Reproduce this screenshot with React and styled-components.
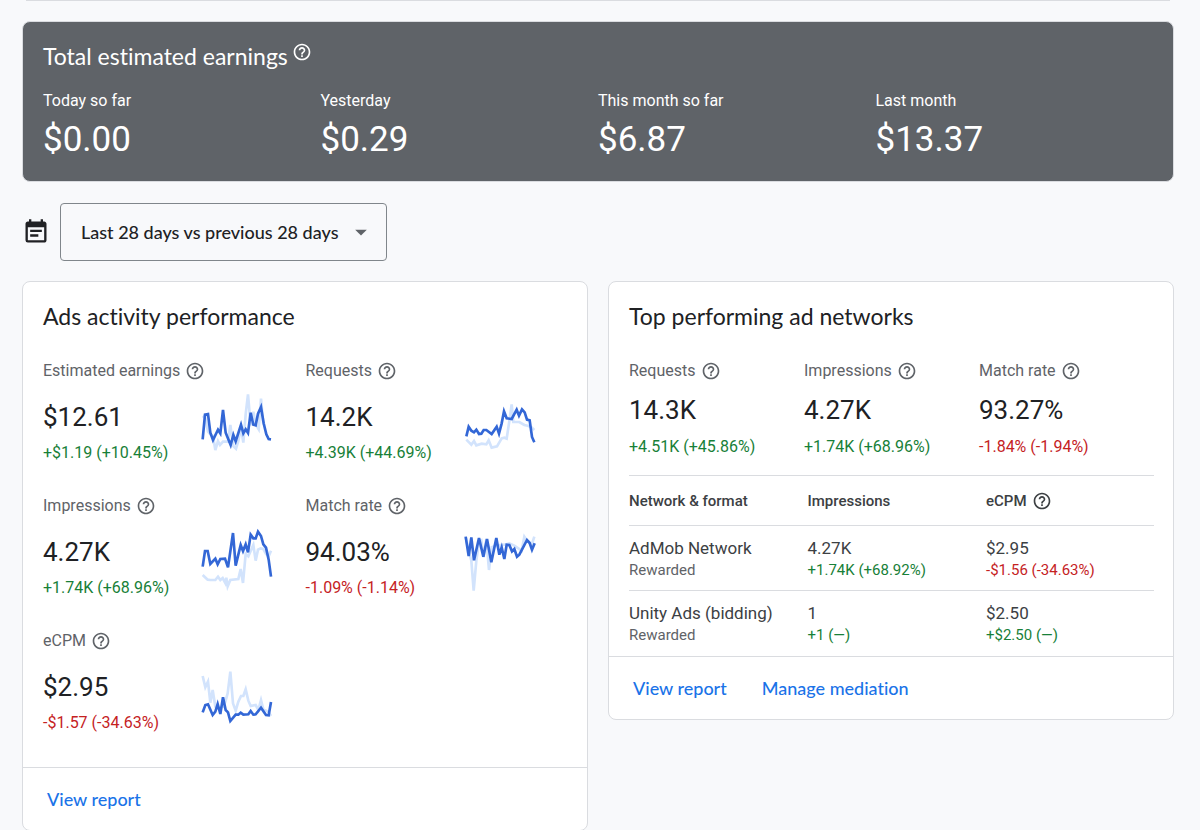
import React, { useState } from 'react'
import styled, { createGlobalStyle } from 'styled-components'
import { MdArrowDropDown, MdEventNote, MdHelpOutline } from 'react-icons/md'


const display = `Lato, 'Open Sans', sans-serif`
const text = `Roboto, 'Liberation Sans', sans-serif`

const deltaColors = {
    up: '#188038',
    down: '#c5221f'
}

const GlobalStyle = createGlobalStyle`
    * {
        box-sizing: border-box;
    }

    body {
        margin: 0;
        background: #f8f9fb;
        color: #202124;
        font-family: ${text};
        font-size: 16px;
        font-variant-ligatures: none;
        line-height: 24px;
    }

    h2, p, dl, dt, dd {
        margin: 0;
    }
`

const Page = styled.main`
    padding: 0 26px 0 22px;
`

const PreviousCard = styled.div`
    height: 1px;
    margin: 0 4px 20px;
    background: #dadce0;
`

const Banner = styled.section`
    padding: 20px 20px 21px;
    border: 1px solid #dadce0;
    border-radius: 8px;
    background: #5f6368;
    color: #fff;
`

const Title = styled.h2`
    display: flex;
    align-items: flex-start;
    gap: 4px;
    font-family: ${display};
    font-size: 23px;
    font-weight: 400;
    line-height: 28px;
`

const EarningsGrid = styled.dl`
    display: grid;
    grid-template-columns: repeat(4, 1fr);
    margin-top: 19px;
`

const EarningsValue = styled.dd`
    padding-top: 7px;
    font-size: 35px;
    line-height: 40px;
`

const HelpButton = styled.button`
    display: inline-flex;
    padding: 0;
    border: 0;
    background: none;
    color: inherit;
    font-size: 20px;
    cursor: pointer;
`

const DateBar = styled.div`
    display: flex;
    align-items: center;
    gap: 10px;
    margin: 21px 0 20px;
`

const CalendarIcon = styled(MdEventNote)`
    font-size: 28px;
`

const SelectBox = styled.div`
    position: relative;
`

const Select = styled.select`
    height: 58px;
    padding: 0 47px 0 20px;
    border: 1px solid #80868b;
    border-radius: 4px;
    appearance: none;
    background: transparent;
    color: #202124;
    font-family: ${display};
    font-size: 18px;
    font-weight: 500;
    cursor: pointer;
`

const SelectArrow = styled(MdArrowDropDown)`
    position: absolute;
    top: 15px;
    right: 12px;
    color: #5f6368;
    font-size: 28px;
    pointer-events: none;
`

const Cards = styled.div`
    display: grid;
    grid-template-columns: 1fr 1fr;
    align-items: start;
    gap: 20px;
`

const Card = styled.section`
    border: 1px solid #dadce0;
    border-radius: 8px;
    background: #fff;
`

const CardBody = styled.div`
    padding: 20px 19px ${props => props.$bottom}px 20px;
`

const CardFooter = styled.footer`
    display: flex;
    gap: 35px;
    padding: 19px 24px;
    border-top: 1px solid #dadce0;
`

const FooterLink = styled.a`
    color: #1a73e8;
    font-family: ${display};
    font-size: 18px;
    font-weight: 500;
    text-decoration: none;
`

const MetricGrid = styled.dl`
    display: grid;
    grid-template-columns: repeat(${props => props.$columns}, 1fr);
    row-gap: 29px;
    margin-top: 29px;
`

const MetricItem = styled.div`
    display: grid;
    grid-template-columns: 158px 1fr;
    align-items: start;
`

const MetricLabel = styled.dt`
    display: flex;
    grid-column: 1 / -1;
    align-items: center;
    gap: 5px;
    color: #5f6368;
`

const MetricValue = styled.dd`
    padding-top: ${props => props.$gap}px;
    font-size: 26px;
    line-height: 32px;
`

const Delta = styled.p`
    color: ${props => deltaColors[props.$trend]};
    font-size: ${props => props.$small ? 15 : 16}px;
    line-height: ${props => props.$small ? 20 : 24}px;
    white-space: nowrap;
`

const MetricDelta = styled(Delta)`
    margin-top: ${props => props.$gap}px;
`

const Spark = styled.svg`
    width: 72px;
    height: 60px;
    margin-top: 8px;
    overflow: visible;
    fill: none;
    stroke-width: 8;
`

const NetworkTable = styled.table`
    width: 100%;
    margin-top: 16px;
    border-collapse: collapse;
    table-layout: fixed;
    text-align: left;
`

const HeadCell = styled.th`
    width: ${props => props.$width};
    height: 50px;
    padding: 0;
    border-top: 1px solid #dadce0;
    color: #3c4043;
    font-size: 15px;
    font-weight: 500;
`

const HeadLabel = styled.span`
    display: flex;
    align-items: center;
    gap: 5px;
`

const Cell = styled.td`
    height: 65px;
    padding: 0;
    border-top: 1px solid #dadce0;
    color: #3c4043;
    font-size: 17px;
    line-height: 24px;
    white-space: nowrap;
`

const Format = styled.p`
    color: #5f6368;
    font-size: 15px;
    line-height: 20px;
`


const earnings = [
    { label: 'Today so far', value: '$0.00' },
    { label: 'Yesterday', value: '$0.29' },
    { label: 'This month so far', value: '$6.87' },
    { label: 'Last month', value: '$13.37' }
]

const activity = [
    {
        label: 'Estimated earnings',
        value: '$12.61',
        delta: '+$1.19 (+10.45%)',
        trend: 'up',
        viewBox: '33 30 216 180',
        previous: '38,105 46,112 54,152 61,160 69,165 76,207 84,180 90,192 99,182 114,182 121,132 130,195 138,203 145,180 153,140 160,185 167,100 174,40 182,133 190,92 197,130 206,145 213,53 220,130',
        current: '38,175 45,101 54,99 61,155 69,177 84,146 91,157 99,87 107,155 122,192 130,162 137,181 153,131 160,157 167,145 174,156 182,95 190,131 197,133 204,98 213,78 221,127 229,160 236,174 243,175'
    },
    {
        label: 'Requests',
        value: '14.2K',
        delta: '+4.39K (+44.69%)',
        trend: 'up',
        viewBox: '39 0 216 180',
        previous: '46,146 61,161 69,150 76,163 92,158 106,160 113,148 122,170 138,166 152,142 160,140 167,143 174,97 182,40 187,93 205,93 220,102 230,104 240,108 250,117',
        current: '46,136 53,107 61,119 69,124 76,116 84,129 91,128 98,117 106,117 122,129 137,107 144,128 152,97 159,61 167,82 182,84 197,56 204,74 213,55 221,64 228,86 236,88 243,138 250,154'
    },
    {
        label: 'Impressions',
        value: '4.27K',
        delta: '+1.74K (+68.96%)',
        trend: 'up',
        viewBox: '33 31 216 180',
        previous: '38,178 53,192 61,193 76,193 84,183 91,193 98,187 106,202 109,186 113,212 121,193 145,190 152,160 159,202 167,115 175,122 190,88 197,135 204,102 212,98 220,100 228,115 236,122 243,105',
        current: '38,153 45,106 53,106 61,145 76,129 83,146 91,130 105,129 114,155 129,52 137,150 152,88 159,106 167,86 174,110 182,57 190,68 197,68 204,48 213,61 220,86 228,96 236,132 243,183'
    },
    {
        label: 'Match rate',
        value: '94.03%',
        delta: '-1.09% (-1.14%)',
        trend: 'down',
        viewBox: '39 16 216 180',
        previous: '44,50 53,90 61,120 68,210 76,120 84,65 91,60 98,110 106,55 114,148 122,80 136,75 160,72 175,68 190,75 212,90 220,48 228,60 243,70 250,48',
        current: '44,48 53,106 61,50 69,119 84,52 97,108 108,55 121,125 136,52 145,102 152,80 160,115 167,72 175,73 183,92 190,85 198,108 205,102 228,58 236,67 243,87 251,68'
    },
    {
        label: 'eCPM',
        value: '$2.95',
        delta: '-$1.57 (-34.63%)',
        trend: 'down',
        viewBox: '33 3 216 180',
        previous: '38,48 46,82 54,65 61,128 68,90 76,140 84,145 99,140 106,125 113,100 121,35 129,130 137,152 145,125 153,108 160,108 167,88 175,122 182,138 197,135 205,150 213,120 220,148 235,155 243,168',
        current: '38,157 46,135 54,133 68,165 76,155 83,132 91,162 99,112 107,150 114,157 121,183 137,164 145,164 152,158 160,164 175,163 182,153 190,164 197,163 213,143 228,165 236,166 243,126'
    }
]

const networkMetrics = [
    { label: 'Requests', value: '14.3K', delta: '+4.51K (+45.86%)', trend: 'up' },
    { label: 'Impressions', value: '4.27K', delta: '+1.74K (+68.96%)', trend: 'up' },
    { label: 'Match rate', value: '93.27%', delta: '-1.84% (-1.94%)', trend: 'down' }
]

const networks = [
    {
        name: 'AdMob Network',
        format: 'Rewarded',
        impressions: { value: '4.27K', delta: '+1.74K (+68.92%)', trend: 'up' },
        ecpm: { value: '$2.95', delta: '-$1.56 (-34.63%)', trend: 'down' }
    },
    {
        name: 'Unity Ads (bidding)',
        format: 'Rewarded',
        impressions: { value: '1', delta: '+1 (—)', trend: 'up' },
        ecpm: { value: '$2.50', delta: '+$2.50 (—)', trend: 'up' }
    }
]


const Help = ({ topic }) => (
    <HelpButton type='button' aria-label={`Help: ${topic}`}>
        <MdHelpOutline />
    </HelpButton>
)

const Metric = ({ metric, gap, deltaGap }) => (
    <MetricItem>
        <MetricLabel>
            {metric.label}
            <Help topic={metric.label} />
        </MetricLabel>
        <MetricValue $gap={gap}>
            {metric.value}
            <MetricDelta $trend={metric.trend} $gap={deltaGap}>{metric.delta}</MetricDelta>
        </MetricValue>
        {metric.current && (
            <Spark viewBox={metric.viewBox} aria-hidden='true'>
                <polyline points={metric.previous} stroke='#d2e3fc' />
                <polyline points={metric.current} stroke='#3367d6' />
            </Spark>
        )}
    </MetricItem>
)

const NumberCell = ({ data }) => (
    <Cell>
        {data.value}
        <Delta $trend={data.trend} $small>{data.delta}</Delta>
    </Cell>
)


const App = () => {
    const [range, setRange] = useState('28')

    return (
        <React.Fragment>
            <GlobalStyle />
            <Page>
                <PreviousCard />

                <Banner>
                    <Title>
                        Total estimated earnings
                        <Help topic='Total estimated earnings' />
                    </Title>
                    <EarningsGrid>
                        {earnings.map(item => (
                            <div key={item.label}>
                                <dt>{item.label}</dt>
                                <EarningsValue>{item.value}</EarningsValue>
                            </div>
                        ))}
                    </EarningsGrid>
                </Banner>

                <DateBar>
                    <CalendarIcon />
                    <SelectBox>
                        <Select
                            aria-label='Date range'
                            value={range}
                            onChange={ev => setRange(ev.target.value)}
                        >
                            <option value='28'>Last 28 days vs previous 28 days</option>
                            <option value='7'>Last 7 days vs previous 7 days</option>
                        </Select>
                        <SelectArrow />
                    </SelectBox>
                </DateBar>

                <Cards>
                    <Card>
                        <CardBody $bottom={32}>
                            <Title>Ads activity performance</Title>
                            <MetricGrid $columns={2}>
                                {activity.map(metric => (
                                    <Metric key={metric.label} metric={metric} gap={18} deltaGap={8} />
                                ))}
                            </MetricGrid>
                        </CardBody>
                        <CardFooter>
                            <FooterLink href='#report'>View report</FooterLink>
                        </CardFooter>
                    </Card>

                    <Card>
                        <CardBody $bottom={0}>
                            <Title>Top performing ad networks</Title>
                            <MetricGrid $columns={3}>
                                {networkMetrics.map(metric => (
                                    <Metric key={metric.label} metric={metric} gap={11} deltaGap={9} />
                                ))}
                            </MetricGrid>
                            <NetworkTable>
                                <thead>
                                    <tr>
                                        <HeadCell $width='34%'>Network &amp; format</HeadCell>
                                        <HeadCell $width='34%'>Impressions</HeadCell>
                                        <HeadCell $width='32%'>
                                            <HeadLabel>
                                                eCPM
                                                <Help topic='eCPM' />
                                            </HeadLabel>
                                        </HeadCell>
                                    </tr>
                                </thead>
                                <tbody>
                                    {networks.map(network => (
                                        <tr key={network.name}>
                                            <Cell>
                                                {network.name}
                                                <Format>{network.format}</Format>
                                            </Cell>
                                            <NumberCell data={network.impressions} />
                                            <NumberCell data={network.ecpm} />
                                        </tr>
                                    ))}
                                </tbody>
                            </NetworkTable>
                        </CardBody>
                        <CardFooter>
                            <FooterLink href='#network-report'>View report</FooterLink>
                            <FooterLink href='#mediation'>Manage mediation</FooterLink>
                        </CardFooter>
                    </Card>
                </Cards>
            </Page>
        </React.Fragment>
    )
}


export default App
